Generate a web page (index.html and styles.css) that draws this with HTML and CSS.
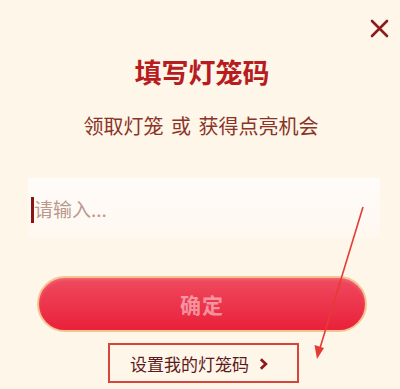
FILE: index.html
```html
<!DOCTYPE html>
<html lang="zh-CN">
<head>
    <meta charset="UTF-8">
    <meta name="viewport" content="width=device-width, initial-scale=1.0">
    <title>填写灯笼码</title>
    <link rel="stylesheet" href="styles.css">
</head>
<body>
    <div class="dialog">
        <div class="top-bar">
            <button class="close-btn" aria-label="关闭">
                <svg width="19" height="19" viewBox="0 0 19 19">
                    <path d="M2 2 L17 17 M17 2 L2 17" stroke="#8e1b1b" stroke-width="2.6" stroke-linecap="round"/>
                </svg>
            </button>
        </div>

        <h2 class="title">填写灯笼码</h2>
        <p class="subtitle">领取灯笼 或 获得点亮机会</p>

        <div class="input-box">
            <span class="caret"></span>
            <span class="placeholder">请输入...</span>
        </div>

        <button class="confirm-btn">确定</button>

        <a class="set-link" href="#">
            设置我的灯笼码
            <svg class="chevron" width="9" height="12" viewBox="0 0 9 12">
                <path d="M1.8 1.3 L6.8 6 L1.8 10.7" fill="none" stroke="#8e1b1b" stroke-width="2.8"/>
            </svg>
        </a>

        <!-- annotation arrow drawn over the dialog -->
        <svg class="hint-arrow" width="400" height="389" viewBox="0 0 400 389">
            <line x1="363" y1="207" x2="320" y2="348" stroke="#e53b35" stroke-width="1.6"/>
            <polygon points="317,359 314.5,345 324,348" fill="#e53b35"/>
        </svg>
    </div>
</body>
</html>
```

FILE: styles.css
```css
body {
    margin: 0;
    background-color: #fdf6e9;
    font-family: "Noto Sans CJK SC", "Noto Sans", sans-serif;
}

.dialog {
    position: relative;
    height: 389px;
    display: flex;
    flex-direction: column;
    align-items: center;
    overflow: hidden;
}

.top-bar {
    align-self: stretch;
    display: flex;
    justify-content: flex-end;
    padding: 19px 11px 0 0;
}

.close-btn {
    width: 19px;
    height: 19px;
    padding: 0;
    border: none;
    background: none;
    display: block;
    cursor: pointer;
}

.close-btn svg {
    display: block;
}

.title {
    margin: 20px 0 0;
    font-size: 27px;
    line-height: 27px;
    font-weight: 700;
    color: #b71c1f;
    padding-left: 4px;
}

.subtitle {
    margin: 31px 0 0;
    font-size: 20px;
    line-height: 20px;
    color: #8a3326;
    word-spacing: 3px;
    padding-left: 2px;
}

.input-box {
    align-self: flex-start;
    margin: 42px 0 0 28px;
    width: 352px;
    height: 60px;
    background: linear-gradient(to bottom, #fffbf9, #fef8f0);
    display: flex;
    align-items: center;
    padding-left: 3px;
    box-sizing: border-box;
}

.caret {
    width: 3px;
    height: 26px;
    margin-top: 4px;
    background-color: #8a1212;
}

.placeholder {
    font-size: 19px;
    line-height: 20px;
    color: #b9998d;
    margin-top: 2px;
}

.confirm-btn {
    align-self: flex-start;
    margin: 38px 0 0 37px;
    width: 330px;
    height: 56px;
    box-sizing: border-box;
    border: 2px solid #f6c493;
    border-radius: 28px;
    background: linear-gradient(to bottom, #ef4a5e, #e9213a);
    box-shadow: inset 0 2px 3px rgba(255, 255, 255, 0.15);
    color: rgba(255, 255, 255, 0.48);
    font-family: inherit;
    font-size: 21px;
    font-weight: 700;
    letter-spacing: 1px;
    padding: 0;
    cursor: pointer;
}

.set-link {
    align-self: flex-start;
    margin: 11px 0 0 108px;
    width: 191px;
    height: 40px;
    box-sizing: border-box;
    border: 2px solid #d8443b;
    display: flex;
    align-items: center;
    padding-left: 20px;
    font-size: 17px;
    color: #5e1a1a;
    text-decoration: none;
}

.chevron {
    margin-left: 10px;
    margin-top: 1px;
}

.hint-arrow {
    position: absolute;
    top: 0;
    left: 0;
    pointer-events: none;
}
```
